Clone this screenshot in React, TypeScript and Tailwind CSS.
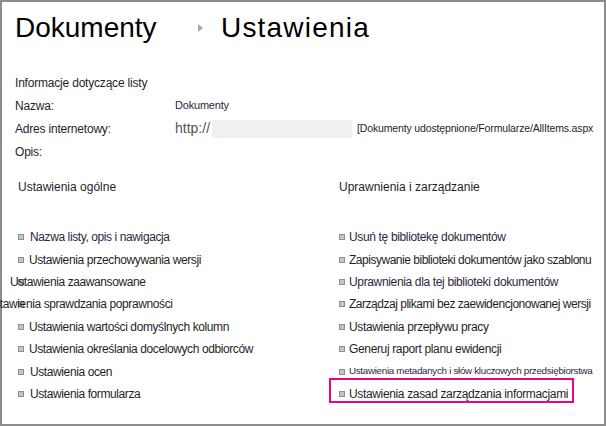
const leftItems = [
  { label: "Nazwa listy, opis i nawigacja", shift: "ml-[6px]", tone: "text-[#2e1f3c]" },
  { label: "Ustawienia przechowywania wersji", shift: "ml-[5px]", tone: "text-[#1f1f1f]" },
  { label: "Ustawienia zaawansowane", shift: "-ml-[14px]", tone: "text-[#1f1f1f]" },
  { label: "Ustawienia sprawdzania poprawności", shift: "-ml-[38px]", tone: "text-[#1f1f1f]" },
  { label: "Ustawienia wartości domyślnych kolumn", shift: "ml-[5px]", tone: "text-[#1f1f1f]" },
  { label: "Ustawienia określania docelowych odbiorców", shift: "ml-[5px]", tone: "text-[#1f1f1f]" },
  { label: "Ustawienia ocen", shift: "ml-[6px]", tone: "text-[#1f1f1f]" },
  { label: "Ustawienia formularza", shift: "ml-[6px]", tone: "text-[#1f1f1f]" },
];

const rightItems = [
  { label: "Usuń tę bibliotekę dokumentów", size: "text-[12px] tracking-[-0.35px]", tone: "text-[#2e1f3c]" },
  { label: "Zapisywanie biblioteki dokumentów jako szablonu", size: "text-[12px] tracking-[-0.48px]", tone: "text-[#1f1f1f]" },
  { label: "Uprawnienia dla tej biblioteki dokumentów", size: "text-[12px] tracking-[-0.35px]", tone: "text-[#2e1f3c]" },
  { label: "Zarządzaj plikami bez zaewidencjonowanej wersji", size: "text-[12px] tracking-[-0.48px]", tone: "text-[#1f1f1f]" },
  { label: "Ustawienia przepływu pracy", size: "text-[12px] tracking-[-0.35px]", tone: "text-[#1f1f1f]" },
  { label: "Generuj raport planu ewidencji", size: "text-[12px] tracking-[-0.35px]", tone: "text-[#1f1f1f]" },
  { label: "Ustawienia metadanych i słów kluczowych przedsiębiorstwa", size: "text-[9.8px] tracking-[-0.3px]", tone: "text-[#2e1f3c]" },
];

function Bullet() {
  return (
    <span className="inline-block w-[6px] h-[6px] shrink-0 bg-[#c4c4c4] border border-[#8f8f8f]" />
  );
}

function InfoRow({ label, children }: { label: string; children?: React.ReactNode }) {
  return (
    <div className="flex items-center h-[23px]">
      <span className="w-[160px] shrink-0 text-[12px] tracking-[-0.2px] text-[#1f1f1f]">{label}</span>
      {children}
    </div>
  );
}

export default function App() {
  return (
    <div
      className="w-[606px] h-[426px] bg-white border-2 border-[#8c8c8c] text-[#1f1f1f]"
      style={{ fontFamily: '"Liberation Sans", Arial, sans-serif' }}
    >
      {/* title */}
      <div className="flex items-center h-[52px] pl-[13px]">
        <span className="w-[183px] text-[28px] leading-none text-black">Dokumenty</span>
        <span className="inline-block w-0 h-0 border-y-[4px] border-y-transparent border-l-[5px] border-l-[#ababab]" />
        <span className="ml-[18px] text-[28px] leading-none tracking-[1.2px] text-black">Ustawienia</span>
      </div>

      {/* list info */}
      <div className="mt-[17px] pl-[13px]">
        <InfoRow label="Informacje dotyczące listy" />
        <InfoRow label="Nazwa:">
          <span className="text-[11px] tracking-[-0.2px] text-[#2e1f3c]">Dokumenty</span>
        </InfoRow>
        <InfoRow label="Adres internetowy:">
          <span className="text-[14px] text-[#555]">http://</span>
          <span className="inline-block ml-[2px] w-[140px] h-[18px] bg-[#f0f0f0]" />
          <span className="ml-[5px] text-[10.5px] tracking-[-0.15px] text-[#1f1f1f]">
            [Dokumenty udostępnione/Formularze/AllItems.aspx
          </span>
        </InfoRow>
        <InfoRow label="Opis:" />
      </div>

      {/* settings columns */}
      <div className="flex mt-[13px]">
        <div className="w-[322px] shrink-0">
          <div className="h-[22px] leading-[22px] pl-[16px] text-[12px]">Ustawienia ogólne</div>
          <div className="mt-[28px]">
            {leftItems.map((item) => (
              <div key={item.label} className="flex items-center h-[22.4px] pl-[16px]">
                <Bullet />
                <span className={`text-[12px] tracking-[-0.4px] whitespace-nowrap ${item.shift} ${item.tone}`}>
                  {item.label}
                </span>
              </div>
            ))}
          </div>
        </div>

        <div className="flex-1">
          <div className="h-[22px] leading-[22px] pl-[15px] text-[12px]">Uprawnienia i zarządzanie</div>
          <div className="mt-[28px]">
            {rightItems.map((item) => (
              <div key={item.label} className="flex items-center h-[22.4px] pl-[15px]">
                <Bullet />
                <span className={`ml-[4px] whitespace-nowrap ${item.size} ${item.tone}`}>
                  {item.label}
                </span>
              </div>
            ))}
            <div className="flex items-center h-[22.4px] pl-[15px]">
              <div className="relative flex items-center">
                <span className="absolute -left-[10px] -top-[7px] w-[245px] h-[25px] border-2 border-[#e5097f]" />
                <Bullet />
                <span className="ml-[4px] text-[12px] tracking-[-0.35px] whitespace-nowrap text-[#1f1f1f]">
                  Ustawienia zasad zarządzania informacjami
                </span>
              </div>
            </div>
          </div>
        </div>
      </div>
    </div>
  );
}
